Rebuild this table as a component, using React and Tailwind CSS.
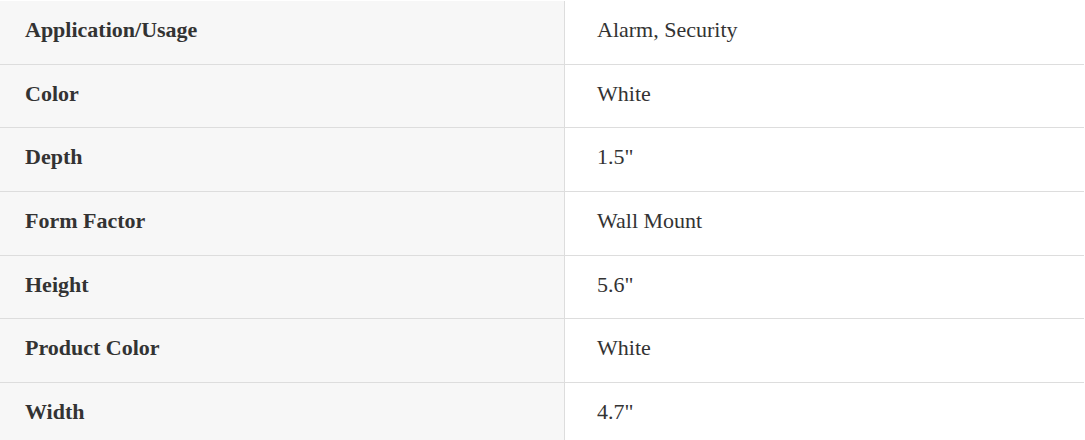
import React from 'react';

const specs = [
  ['Application/Usage', 'Alarm, Security'],
  ['Color', 'White'],
  ['Depth', '1.5"'],
  ['Form Factor', 'Wall Mount'],
  ['Height', '5.6"'],
  ['Product Color', 'White'],
  ['Width', '4.7"'],
];

export default function App() {
  return (
    <div className="w-[1085px] h-[440px] overflow-hidden bg-white text-[#333] font-['Liberation_Serif','Times_New_Roman',serif] text-[22px] leading-[25px] pt-px">
      <div className="w-[1084px]">
        {specs.map(([label, value], i) => (
          <div
            key={label}
            className={`flex h-[63.65px] ${i < specs.length - 1 ? 'border-b border-[#dddddd]' : ''}`}
          >
            <div className="w-[565px] shrink-0 bg-[#f7f7f7] border-r border-[#dddddd] pt-[16px] pl-[25px] font-bold">
              {label}
            </div>
            <div className="flex-1 pt-[16px] pl-[32px]">{value}</div>
          </div>
        ))}
      </div>
    </div>
  );
}
